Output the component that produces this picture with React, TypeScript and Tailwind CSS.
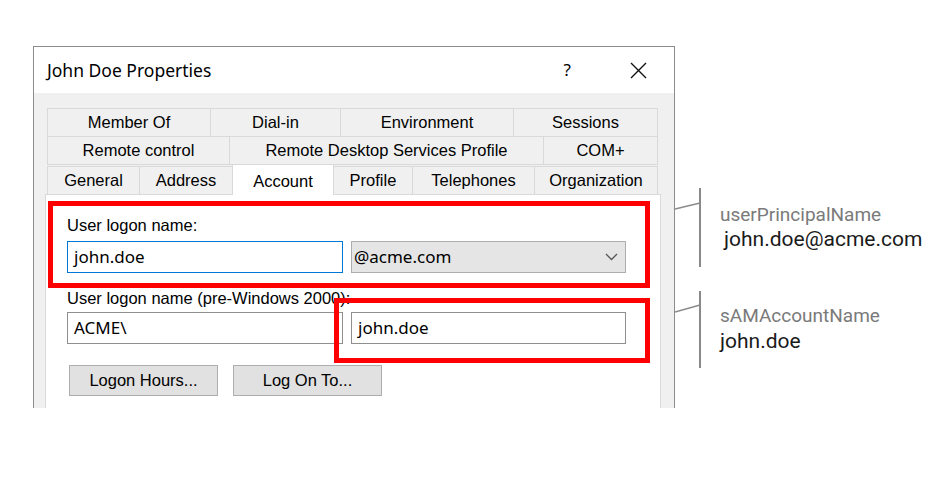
import React from 'react'

const ui = { fontFamily: '"Liberation Sans", Arial, sans-serif' }
const seg = { fontFamily: '"Noto Sans", "Open Sans", sans-serif' }
const rob = { fontFamily: 'Roboto, "Noto Sans", sans-serif' }

type Tab = { label: string; w: string }

const row1: Tab[] = [
  { label: 'Member Of', w: 'w-[164px]' },
  { label: 'Dial-in', w: 'w-[131px]' },
  { label: 'Environment', w: 'w-[174px]' },
  { label: 'Sessions', w: 'w-[145px]' },
]

const row2: Tab[] = [
  { label: 'Remote control', w: 'w-[183px]' },
  { label: 'Remote Desktop Services Profile', w: 'w-[315px]' },
  { label: 'COM+', w: 'w-[115px]' },
]

const row3: Tab[] = [
  { label: 'General', w: 'w-[93px]' },
  { label: 'Address', w: 'w-[94px]' },
  { label: 'Account', w: 'w-[102px]' },
  { label: 'Profile', w: 'w-[80px]' },
  { label: 'Telephones', w: 'w-[123px]' },
  { label: 'Organization', w: 'w-[124px]' },
]

const TabRow = ({ tabs, active }: { tabs: Tab[]; active?: string }) => (
  <div className="flex items-end -mt-px first:mt-0">
    {tabs.map(t =>
      t.label === active ? (
        <div
          key={t.label}
          className={`${t.w} relative z-10 -ml-px flex h-[31px] items-start justify-center border border-b-0 border-[#d9d9d9] bg-white pt-[4px] text-[16.5px] text-black`}
        >
          {t.label}
        </div>
      ) : (
        <div
          key={t.label}
          className={`${t.w} -ml-px flex h-[29px] items-center justify-center border border-[#d9d9d9] bg-[#f0f0f0] text-[16.5px] text-black first:ml-0`}
        >
          {t.label}
        </div>
      )
    )}
  </div>
)

const Bracket = ({ h, y1, y2 }: { h: number; y1: number; y2: number }) => (
  <svg width="26" height={h} className="shrink-0">
    <line x1="25" y1="0" x2="25" y2={h} stroke="#8a8a8a" strokeWidth="2" />
    <line x1="0" y1={y1} x2="25" y2={y2} stroke="#8a8a8a" strokeWidth="1.5" />
  </svg>
)

export default function App() {
  return (
    <div className="flex h-[497px] w-[949px] items-start overflow-hidden bg-white pl-[33px] pt-[46px]">
      {/* dialog window */}
      <div
        className="flex h-[362px] w-[642px] shrink-0 flex-col overflow-hidden border-x border-t border-[#8c8c8c] bg-[#f0f0f0]"
        style={ui}
      >
        <div className="flex h-[46px] shrink-0 items-center bg-white pl-[13px] text-black">
          <span className="text-[17.5px]" style={seg}>
            John Doe Properties
          </span>
          <span className="ml-auto mr-[59px] text-[17px]" style={seg}>
            ?
          </span>
          <svg width="17" height="17" viewBox="0 0 17 17" className="mr-[27px]">
            <path d="M1 1 L16 16 M16 1 L1 16" stroke="#111" strokeWidth="1.4" />
          </svg>
        </div>

        <div className="flex flex-1 flex-col pl-[11px] pr-[13px] pt-[15px]">
          <div className="ml-[2px] flex flex-col">
            <TabRow tabs={row1} />
            <TabRow tabs={row2} />
            <TabRow tabs={row3} active="Account" />
          </div>

          <div className="relative -mt-px h-[240px] shrink-0 border border-[#d9d9d9] bg-white pl-[21px] pt-[20px]">
            <div className="h-[20px] text-[16.5px] leading-[20px] text-black">User logon name:</div>
            <div className="mt-[6px] flex gap-[8px]">
              <div
                className="flex h-[32px] w-[276px] items-center border border-[#0078d7] bg-white pl-[6px] text-[17px] text-black"
                style={seg}
              >
                john.doe
              </div>
              <div
                className="flex h-[32px] w-[275px] items-center border border-[#adadad] bg-[#e5e5e5] pl-[2px] pr-[7px] text-[17px] text-black"
                style={seg}
              >
                @acme.com
                <svg width="13" height="8" viewBox="0 0 13 8" className="ml-auto">
                  <path d="M1 1 L6.5 6.5 L12 1" fill="none" stroke="#555" strokeWidth="1.3" />
                </svg>
              </div>
            </div>

            <div className="mt-[15px] h-[20px] text-[16.5px] leading-[20px] text-black">
              User logon name (pre-Windows 2000):
            </div>
            <div className="mt-[4px] flex gap-[8px]">
              <div
                className="flex h-[32px] w-[276px] items-center border border-[#8f8f8f] bg-white pl-[6px] text-[17px] text-black"
                style={seg}
              >
                ACME\
              </div>
              <div
                className="flex h-[32px] w-[275px] items-center border border-[#8f8f8f] bg-white pl-[6px] text-[17px] text-black"
                style={seg}
              >
                john.doe
              </div>
            </div>

            <div className="ml-[2px] mt-[21px] flex gap-[15px]">
              <div className="flex h-[31px] w-[149px] items-center justify-center border border-[#adadad] bg-[#e1e1e1] text-[16.5px] text-black">
                Logon Hours...
              </div>
              <div className="flex h-[31px] w-[149px] items-center justify-center border border-[#adadad] bg-[#e1e1e1] text-[16.5px] text-black">
                Log On To...
              </div>
            </div>

            {/* highlight boxes */}
            <div className="pointer-events-none absolute left-[2px] top-[6px] h-[87px] w-[602px] border-[5px] border-[#ff0000]" />
            <div className="pointer-events-none absolute left-[288px] top-[103px] h-[65px] w-[316px] border-[5px] border-[#ff0000]" />
          </div>
        </div>
      </div>

      {/* annotations */}
      <div className="flex flex-col gap-[24px] pt-[142px]" style={rob}>
        <div className="flex h-[79px]">
          <Bracket h={79} y1={21} y2={15} />
          <div className="ml-[19px] pt-[16px]">
            <div className="text-[19px] leading-[22px] text-[#7a7a7a]">userPrincipalName</div>
            <div className="mt-[1px] pl-[4px] text-[21px] leading-[25px] text-[#1a1a1a] whitespace-nowrap">john.doe@acme.com</div>
          </div>
        </div>
        <div className="flex h-[77px]">
          <Bracket h={77} y1={21} y2={14} />
          <div className="ml-[19px] pt-[14px]">
            <div className="text-[19px] leading-[22px] text-[#7a7a7a]">sAMAccountName</div>
            <div className="mt-[2px] text-[21px] leading-[25px] text-[#1a1a1a]">john.doe</div>
          </div>
        </div>
      </div>
    </div>
  )
}
